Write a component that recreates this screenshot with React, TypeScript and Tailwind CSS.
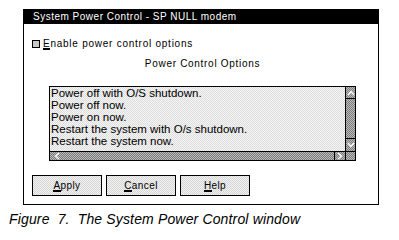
import React from "react";

const ui2 = { fontFamily: '"Liberation Sans", Arial, sans-serif' };

function U({ c }: { c: string }) {
  return <span className="border-b-2 border-black leading-[9px] inline-block">{c}</span>;
}

function Btn({ first, rest }: { first: string; rest: string }) {
  return (
    <div className="w-[70px] h-[21px] border border-black bg-[repeating-conic-gradient(#d6d6d6_0_25%,#f2f2f2_0_50%)] bg-[length:2px_2px] flex items-center justify-center text-[10px] tracking-[0.4px] text-black" style={ui2}>
      <span>
        <U c={first} />
        {rest}
      </span>
    </div>
  );
}

export default function App() {
  const items = [
    "Power off with O/S shutdown.",
    "Power off now.",
    "Power on now.",
    "Restart the system with O/s shutdown.",
    "Restart the system now.",
  ];
  return (
    <div className="w-[399px] h-[240px] bg-white overflow-hidden">
      <div className="ml-[23px] mt-[9px] w-[356px] h-[196px] border border-black border-t-0 flex flex-col">
        <div className="h-[15px] bg-black text-white text-[10px] tracking-[0.5px] pl-[9px] leading-[15px] whitespace-pre" style={ui2}>
          System Power Control - SP NULL modem
        </div>
        <div className="mt-[16px] ml-[8px] flex items-center h-[8px] text-[10px] tracking-[0.75px] text-black" style={ui2}>
          <div className="w-[8px] h-[8px] border border-black bg-[#c8c8c8] mr-[3px]" />
          <span className="leading-[10px]">
            <U c="E" />
            nable power control options
          </span>
        </div>
        <div className="mt-[10px] ml-[25px] w-[307px] text-center text-[10px] tracking-[0.7px] leading-[12px] text-black" style={ui2}>
          Power Control Options
        </div>
        <div className="mt-[16px] ml-[25px] w-[307px] h-[75px] border border-black flex flex-col">
          <div className="flex flex-1 min-h-0">
            <div className="flex-1 bg-[repeating-conic-gradient(#dcdcdc_0_25%,#f6f6f6_0_50%)] bg-[length:2px_2px] pl-[1px] text-[11.5px] leading-[12px] text-black" style={ui2}>
              {items.map((t) => (
                <div key={t} className="h-[12px] whitespace-pre">{t}</div>
              ))}
            </div>
            <div className="w-[10px] border-l border-black bg-[repeating-conic-gradient(#7c7c7c_0_25%,#bababa_0_50%)] bg-[length:2px_2px] flex flex-col justify-between">
              <div className="h-[12px] border-b border-black flex items-center justify-center">
                <svg width="8" height="6" viewBox="0 0 8 6"><path d="M1 5 L4 1.5 L7 5" stroke="white" strokeWidth="1.3" fill="none" /></svg>
              </div>
              <div className="h-[13px] border-t border-black flex items-center justify-center">
                <svg width="8" height="6" viewBox="0 0 8 6"><path d="M1 1 L4 4.5 L7 1" stroke="white" strokeWidth="1.3" fill="none" /></svg>
              </div>
            </div>
          </div>
          <div className="h-[9px] border-t border-black flex bg-[repeating-conic-gradient(#7c7c7c_0_25%,#bababa_0_50%)] bg-[length:2px_2px]">
            <div className="w-[13px] flex items-center justify-center">
              <svg width="6" height="8" viewBox="0 0 6 8"><path d="M5 1 L1.5 4 L5 7" stroke="white" strokeWidth="1.3" fill="none" /></svg>
            </div>
            <div className="flex-1" />
            <div className="w-[11px] border-l border-black flex items-center justify-center">
              <svg width="6" height="8" viewBox="0 0 6 8"><path d="M1 1 L4.5 4 L1 7" stroke="white" strokeWidth="1.3" fill="none" /></svg>
            </div>
            <div className="w-[10px] border-l border-black" />
          </div>
        </div>
        <div className="mt-[14px] ml-[8px] flex gap-[4px]">
          <Btn first="A" rest="pply" />
          <Btn first="C" rest="ancel" />
          <Btn first="H" rest="elp" />
        </div>
      </div>
      <div className="ml-[9px] mt-[6px] text-[14px] italic leading-[16px] tracking-[0.15px] text-black whitespace-pre" style={ui2}>
        Figure  7.  The System Power Control window
      </div>
    </div>
  );
}
